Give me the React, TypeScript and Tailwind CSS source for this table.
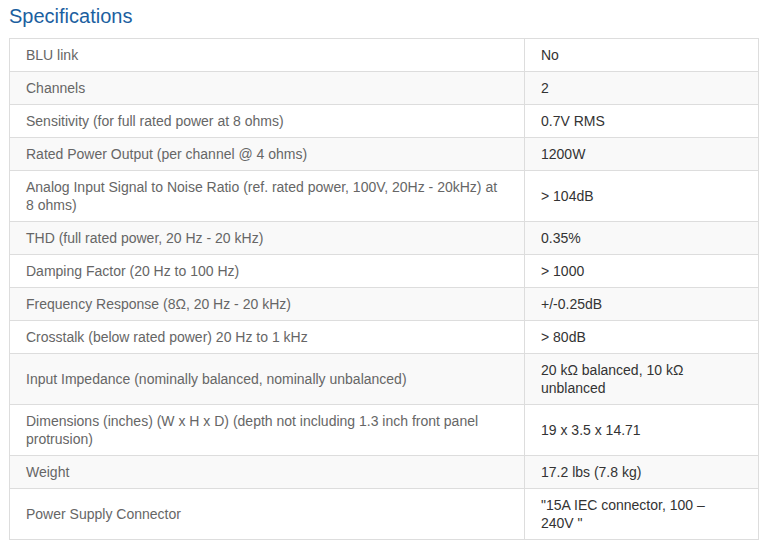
const specs: [string, string][] = [
  ['BLU link', 'No'],
  ['Channels', '2'],
  ['Sensitivity (for full rated power at 8 ohms)', '0.7V RMS'],
  ['Rated Power Output (per channel @ 4 ohms)', '1200W'],
  ['Analog Input Signal to Noise Ratio (ref. rated power, 100V, 20Hz - 20kHz) at 8 ohms)', '> 104dB'],
  ['THD (full rated power, 20 Hz - 20 kHz)', '0.35%'],
  ['Damping Factor (20 Hz to 100 Hz)', '> 1000'],
  ['Frequency Response (8Ω, 20 Hz - 20 kHz)', '+/-0.25dB'],
  ['Crosstalk (below rated power) 20 Hz to 1 kHz', '> 80dB'],
  ['Input Impedance (nominally balanced, nominally unbalanced)', '20 kΩ balanced, 10 kΩ unblanced'],
  ['Dimensions (inches) (W x H x D) (depth not including 1.3 inch front panel protrusion)', '19 x 3.5 x 14.71'],
  ['Weight', '17.2 lbs (7.8 kg)'],
  ['Power Supply Connector', '"15A IEC connector, 100 – 240V "'],
]

export default function App() {
  return (
    <div className="min-h-screen bg-white font-['Liberation_Sans',Arial,sans-serif] pl-[9px] pt-[4px]">
      {/* Heading */}
      <h2 className="text-[20px] leading-[24px] text-[#1c5fa0] mb-[10px]">Specifications</h2>

      {/* Spec table */}
      <table className="w-[750px] table-fixed border-collapse border border-[#dddddd] text-[14px] leading-[18px]">
        <colgroup>
          <col className="w-[515px]" />
          <col />
        </colgroup>
        <tbody>
          {specs.map(([label, value], i) => (
            <tr key={label} className={i % 2 === 1 ? 'bg-[#f9f9f9]' : 'bg-white'}>
              <td className="border border-[#dddddd] pl-[16px] pr-[19px] py-[7px] align-middle text-[#666666]">
                {label}
              </td>
              <td className="border border-[#dddddd] pl-[16px] pr-[22px] py-[7px] align-middle text-[#333333]">
                {value}
              </td>
            </tr>
          ))}
        </tbody>
      </table>
    </div>
  )
}
